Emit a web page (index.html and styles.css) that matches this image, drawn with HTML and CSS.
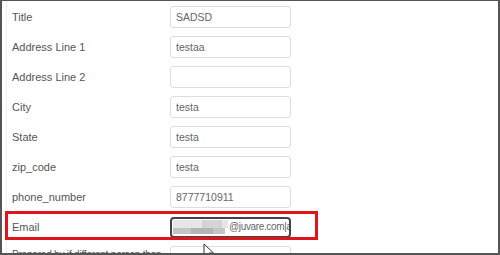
FILE: index.html
```html
<!DOCTYPE html>
<html>
<head>
<meta charset="utf-8">
<link rel="stylesheet" href="styles.css">
</head>
<body>
<div class="frame">
  <div class="form">
    <div class="row"><label>Title</label><div class="input">SADSD</div></div>
    <div class="row"><label>Address Line 1</label><div class="input">testaa</div></div>
    <div class="row"><label>Address Line 2</label><div class="input"></div></div>
    <div class="row"><label>City</label><div class="input">testa</div></div>
    <div class="row"><label>State</label><div class="input">testa</div></div>
    <div class="row"><label>zip_code</label><div class="input">testa</div></div>
    <div class="row"><label>phone_number</label><div class="input">8777710911</div></div>
    <div class="row highlight"><label>Email</label>
      <div class="input focus">
        <span class="blur">
          <span class="b1"></span><span class="b2"></span><span class="b3"></span><span class="b4"></span>
        </span>
        <span class="domain">@juvare.com|a</span>
      </div>
    </div>
    <div class="row last"><label>Prepared by if different person than the submitter</label><div class="input"></div></div>
  </div>
  <svg class="cursor" width="12" height="18" viewBox="0 0 12 18"><path d="M1 1 L1 14 L4 11 L6.5 16.5 L8.5 15.5 L6 10 L10.5 10 Z" fill="#fff" stroke="#333" stroke-width="1"/></svg>
</div>
</body>
</html>
```
FILE: styles.css
```css
html, body { margin: 0; padding: 0; background: #fff; }
body { width: 500px; height: 255px; overflow: hidden; font-family: "Liberation Sans", Arial, sans-serif; }
.frame {
  position: relative;
  box-sizing: border-box;
  width: 500px; height: 255px;
  border: 2px solid #555;
  border-top-width: 1px;
  overflow: hidden;
  background: #fff;
}
.form {
  margin-left: 4px;
  border-left: 1px solid #eee;
  padding-top: 5px;
  padding-left: 5px;
  display: flex; flex-direction: column; gap: 8px;
}
.row { display: flex; align-items: center; height: 22px; }
.row label { width: 158px; flex: none; font-size: 11px; color: #555; white-space: nowrap; }
.row.last { align-items: flex-start; height: 30px; }
.row.last label { white-space: normal; width: 158px; font-size: 10px; letter-spacing: -0.2px; line-height: 13px; padding-top: 2px; }
.input {
  box-sizing: border-box;
  width: 121px; height: 22px; flex: none;
  border: 1px solid #ddd; border-radius: 3px;
  font-size: 10.5px; color: #666;
  padding-left: 5px; line-height: 20px;
  display: flex; align-items: center;
  overflow: hidden;
}
.highlight { position: relative; }
.highlight::before {
  content: ""; position: absolute;
  box-sizing: border-box;
  left: -7px; top: -5px; width: 313px; height: 29px;
  border: 3px solid #e0141a;
}
.input.focus { border: 2px solid #444; border-radius: 4px; padding-left: 1px; height: 21px; }
.blur { position: relative; width: 55px; height: 14px; display: block; flex: none; }
.blur span { position: absolute; display: block; }
.b1 { left: 0; top: 0; width: 55px; height: 8px; background: #e6e6e6; }
.b2 { left: 0; top: 8px; width: 52px; height: 6px; background: #c4c4c4; }
.b3 { left: 29px; top: 0; width: 20px; height: 8px; background: #d4d4d4; }
.b4 { left: 18px; top: 8px; width: 22px; height: 6px; background: #b4b4b4; }
.domain { font-size: 10px; color: #666; margin-left: 1px; letter-spacing: -0.35px; white-space: nowrap; }
.cursor { position: absolute; left: 201px; top: 242px; }
```
